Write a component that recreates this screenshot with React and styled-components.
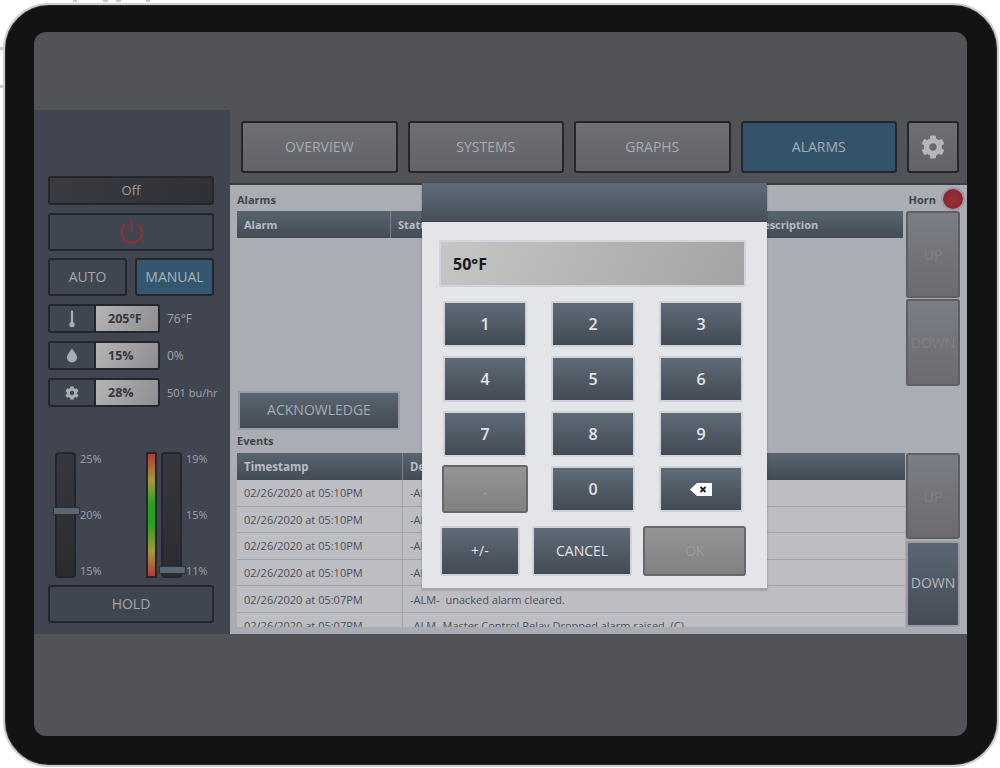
import React from 'react';
import styled, { createGlobalStyle } from 'styled-components';
import { Power } from 'lucide-react';
import { FaCog } from 'react-icons/fa';

const Global = createGlobalStyle`
  html, body { margin: 0; padding: 0; background: #fff; overflow: hidden; }
  * { box-sizing: border-box; }
  body { font-family: "Open Sans", "Liberation Sans", sans-serif; }
`;

const Page = styled.div`
  width: 1000px; height: 768px; padding: 3px 1px 1px 3px; position: relative; background: #fff;
`;
const SideKey = styled.div`
  position: absolute; background: #c9c9c9;
  ${p => p.$top ? `top: 0; left: ${p.$x}px; width: ${p.$w}px; height: 2px;` : `left: 0; top: ${p.$y}px; width: 3px; height: ${p.$h}px;`}
`;
const Tablet = styled.div`
  width: 100%; height: 100%; border: 2px solid #cfcfcf; border-radius: 46px; background: #111413;
  padding: 27px 30px 29px 29px; box-shadow: inset 0 0 0 1px #2a2a2a;
`;
const Screen = styled.div`
  position: relative; width: 100%; height: 100%; border-radius: 12px; overflow: hidden; background: #525357;
  display: flex; flex-direction: column; padding-top: 78px;
`;
const Main = styled.div`
  display: flex; height: 524px;
`;
const Sidebar = styled.aside`
  width: 196px; background: #40454f; padding: 66px 16px 0 14px; display: flex; flex-direction: column; color: #a9adb5;
`;
const DarkBtn = styled.div`
  display: flex; align-items: center; justify-content: center; height: ${p => p.$h}px; width: ${p => p.$w ? p.$w + 'px' : '100%'};
  margin-bottom: ${p => p.$mb ?? 8}px; border: 2px solid #23262c; border-radius: 3px; padding-bottom: 1px;
  background: ${p => p.$bg || '#40464f'}; color: ${p => p.$c || '#a1a6ae'}; font-size: ${p => p.$fs || 14}px; font-weight: 500;
`;
const Row = styled.div`
  display: flex; justify-content: space-between;
`;
const StatRow = styled.div`
  display: flex; align-items: center; height: 29px; margin-bottom: 8px;
`;
const StatBox = styled.div`
  display: flex; flex: 0 0 112px; height: 100%; border: 2px solid #23262c; border-radius: 3px; overflow: hidden;
`;
const StatIcon = styled.div`
  width: 46px; display: flex; align-items: center; justify-content: center; background: #40464f; border-right: 2px solid #23262c;
`;
const StatValue = styled.div`
  flex: 1; display: flex; align-items: center; padding: 0 0 1px 12px; font-size: 12.5px; font-weight: 700; color: #35373d;
  background: linear-gradient(115deg, #b4b4b5, #8e8e90);
`;
const StatText = styled.span`
  margin-left: 7px; font-size: ${p => p.$fs || 12}px; color: #a3a7af; white-space: nowrap; padding-bottom: 1px;
`;
const Sliders = styled.div`
  display: flex; margin: 37px 0 7px 7px; height: 126px;
`;
const Track = styled.div`
  position: relative; width: 21px; height: 126px; border: 2px solid #23262c; border-radius: 4px;
  background: linear-gradient(#37383d, #2b2c30);
`;
const Thumb = styled.div`
  position: absolute; left: -4px; width: 27px; height: 8px; top: ${p => p.$top}px; background: #5a6671; border: 1px solid #2b2f36; border-radius: 1px;
`;
const Scale = styled.div`
  display: flex; flex-direction: column; justify-content: space-between; margin-left: 4px; width: ${p => p.$w}px;
  height: 126px; font-size: 11px; color: #9ea3ab; line-height: 14px;
`;
const Gauge = styled.div`
  width: 11px; height: 126px; margin-right: 4px; border: 2px solid #23262c;
  background: linear-gradient(#b33a3a, #a5973a 22%, #23a021 42%, #23a021 56%, #a5973a 80%, #b33a3a);
`;
const Content = styled.section`
  flex: 1; display: flex; flex-direction: column; min-width: 0;
`;
const Nav = styled.nav`
  height: 75px; padding: 11px 8px 0 11px; display: flex; gap: 10px; background: #525357; border-bottom: 2px solid #3b3e45;
`;
const NavBtn = styled.div`
  width: ${p => p.$w || 156.5}px; height: 52px; display: flex; align-items: center; justify-content: center; font-size: 14px; font-weight: 500;
  color: #a8abb2; border: 2px solid #23262c; border-radius: 3px; padding-bottom: 1px;
  background: ${p => p.$active ? '#32536a' : 'linear-gradient(#6e6f75, #636469)'};
`;
const Panel = styled.div`
  flex: 1; background: #abadb5; padding: 5px 7px 0 7px; display: flex; flex-direction: column; position: relative; min-height: 0;
`;
const HeaderLine = styled.div`
  display: flex; justify-content: space-between; align-items: center; flex-shrink: 0; height: ${p => p.$h || 21}px; padding-bottom: 2px;
`;
const SectionLabel = styled.span`
  font-size: 11px; font-weight: 700; color: #3f434b;
`;
const HornWrap = styled.div`
  display: flex; align-items: center; gap: 7px; margin-right: -3px; margin-top: -1px;
`;
const Led = styled.div`
  width: 20px; height: 20px; border-radius: 50%; background: radial-gradient(#98303a, #85232d); box-shadow: 0 0 0 2px #9a9ca5;
`;
const TableRow = styled.div`
  display: flex; gap: ${p => p.$gap}px; height: ${p => p.$h}px; flex-shrink: 0;
`;
const TableArea = styled.div`
  width: ${p => p.$w}px; display: flex; flex-direction: column;
`;
const THead = styled.div`
  display: flex; height: ${p => p.$h}px; background: linear-gradient(#596570, #434b54); flex-shrink: 0;
`;
const Th = styled.div`
  width: ${p => p.$w ? p.$w + 'px' : 'auto'}; flex: ${p => p.$w ? '0 0 auto' : 1}; display: flex; align-items: center; padding-left: 7px;
  font-size: ${p => p.$fs || 11}px; font-weight: 700; color: #b9bcc2; border-right: ${p => p.$w ? '1px solid #7b838c' : 'none'};
`;
const TBody = styled.div`
  flex: 1; overflow: hidden; min-height: 0;
`;
const Tr = styled.div`
  display: flex; height: 26.6px; background: #bdbec3; border-bottom: 1px solid #a2a4ab;
`;
const Td = styled.div`
  width: ${p => p.$w ? p.$w + 'px' : 'auto'}; flex: ${p => p.$w ? '0 0 auto' : 1}; display: flex; align-items: center; padding-left: 7px;
  font-size: 11px; color: #4b4e56; white-space: pre; border-right: ${p => p.$w ? '1px solid #a2a4ab' : 'none'};
`;
const Side = styled.div`
  width: 54px; display: flex; flex-direction: column; gap: ${p => p.$gap}px;
`;
const ScrollBtn = styled.div`
  flex: 0 0 ${p => p.$h || 87}px; display: flex; align-items: center; justify-content: center; font-size: 14px; border-radius: 3px; font-weight: 500;
  padding-bottom: ${p => p.$on ? 3 : 0}px;
  color: ${p => p.$on ? '#b4b7bd' : '#7f8086'};
  border: 2px solid ${p => p.$on ? '#9a9ca5' : '#5e5f65'};
  background: ${p => p.$on ? 'linear-gradient(#5a6672, #454c56)' : 'linear-gradient(#7b7e85, #6b6b70)'};
`;
const AckBtn = styled.div`
  margin: 5px 0 0 1px; flex: 0 0 39px; width: 162px; display: flex; align-items: center; justify-content: center; font-size: 14px; font-weight: 500; color: #a6abb2;
  border: 2px solid #9a9ca5; background: linear-gradient(#596570, #434b54); padding-bottom: 2px;
`;
const AlarmEmpty = styled.div`
  flex: 1;
`;
const Overlay = styled.div`
  position: absolute; left: 388px; top: 151px; width: 345px; height: 407px; background: #e4e5e9; border-bottom: 2px solid #a5a6ab;
  box-shadow: 0 0 2px rgba(0,0,0,.3); display: flex; flex-direction: column;
`;
const ModalHead = styled.div`
  height: 39px; flex-shrink: 0; background: linear-gradient(#5e6b77, #47505a); border-bottom: 1px solid #3b4149;
`;
const ModalBody = styled.div`
  padding: 18px 21px 0 17px; display: flex; flex-direction: column;
`;
const Display = styled.div`
  height: 47px; display: flex; align-items: center; padding-left: 12px; font-size: 16px; font-weight: 700; color: #17181a;
  border: 2px solid #d2d4dc; border-radius: 2px; background: linear-gradient(115deg, #c6c6c5, #a3a3a4);
`;
const Keypad = styled.div`
  display: grid; grid-template-columns: repeat(3, 84px); grid-auto-rows: 46px; column-gap: 24px; row-gap: 9px; margin: 14px 0 0 4px;
`;
const Key = styled.div`
  display: flex; align-items: center; justify-content: center; font-size: ${p => p.$fs || 16}px; font-weight: 600; color: #e2e4e8;
  border: 2px solid #d0d2da; border-radius: 2px; background: linear-gradient(#5e6b77, #434b54);
`;
const DisabledKey = styled.div`
  display: flex; align-items: center; justify-content: center; font-size: ${p => p.$fs || 16}px; font-weight: 600; color: #9c9ca0;
  margin: ${p => p.$grid ? '-1px' : 0}; border: 2px solid #66676b; border-radius: 3px; background: linear-gradient(#959598, #808080);
`;
const ActionRow = styled.div`
  display: flex; margin: 14px 0 0 1px; height: 50px;
`;
const ActionKey = styled(Key)`
  width: ${p => p.$w}px; margin-right: ${p => p.$mr}px; font-size: 14px; font-weight: 500; padding-bottom: 2px;
`;
const OkKey = styled(DisabledKey)`
  width: 103px; font-size: 14px; font-weight: 500; padding-bottom: 1px;
`;

const Thermo = () => (
  <svg width="8" height="18" viewBox="0 0 8 18"><path d="M2.9 1.5a1.1 1.1 0 0 1 2.2 0v10.4a2.8 2.8 0 1 1-2.2 0z" fill="#a9adb4"/></svg>
);
const Drop = () => (
  <svg width="12" height="15" viewBox="0 0 12 15"><path d="M6 0c1 3 5 6 5 9.5a5 5 0 0 1-10 0C1 6 5 3 6 0z" fill="#a9adb4"/></svg>
);
const Backspace = () => (
  <svg width="22" height="13" viewBox="0 0 22 13"><path d="M7 0h15v13H7L0 6.5z" fill="#fff"/><path d="M10.5 4l5 5M15.5 4l-5 5" stroke="#1d2025" strokeWidth="1.8"/></svg>
);

const events = [
  ['02/26/2020 at 05:10PM', '-AL'],
  ['02/26/2020 at 05:10PM', '-AL'],
  ['02/26/2020 at 05:10PM', '-AL'],
  ['02/26/2020 at 05:10PM', '-AL'],
  ['02/26/2020 at 05:07PM', '-ALM-  unacked alarm cleared.'],
  ['02/26/2020 at 05:07PM', '-ALM- Master Control Relay Dropped alarm raised. (C)'],
];

export default function App() {
  return (
    <Page>
      <Global />
      <SideKey $top $x={73} $w={4} />
      <SideKey $top $x={103} $w={5} />
      <SideKey $top $x={116} $w={5} />
      <SideKey $top $x={146} $w={4} />
      <SideKey $y={47} $h={3} />
      <SideKey $y={85} $h={3} />
      <Tablet>
        <Screen>
          <Main>
            <Sidebar>
              <DarkBtn $h={29} $bg="linear-gradient(90deg, #3a3b40, #303136)" $c="#9a9ea6" $fs={13}>Off</DarkBtn>
              <DarkBtn $h={38} $mb={7}><Power size={27} color="#a0282f" strokeWidth={1.6} /></DarkBtn>
              <Row>
                <DarkBtn $h={38} $w={79}>AUTO</DarkBtn>
                <DarkBtn $h={38} $w={79} $bg="#34566e" $c="#a9b1b9">MANUAL</DarkBtn>
              </Row>
              <StatRow>
                <StatBox><StatIcon><Thermo /></StatIcon><StatValue>205°F</StatValue></StatBox>
                <StatText>76°F</StatText>
              </StatRow>
              <StatRow>
                <StatBox><StatIcon><Drop /></StatIcon><StatValue>15%</StatValue></StatBox>
                <StatText>0%</StatText>
              </StatRow>
              <StatRow>
                <StatBox><StatIcon><FaCog size={14} color="#a9adb4" /></StatIcon><StatValue>28%</StatValue></StatBox>
                <StatText $fs={11}>501 bu/hr</StatText>
              </StatRow>
              <Sliders>
                <Track><Thumb $top={53} /></Track>
                <Scale $w={66}><span>25%</span><span>20%</span><span>15%</span></Scale>
                <Gauge />
                <Track><Thumb $top={112} /></Track>
                <Scale $w={28}><span>19%</span><span>15%</span><span>11%</span></Scale>
              </Sliders>
              <DarkBtn $h={38} $mb={0}>HOLD</DarkBtn>
            </Sidebar>
            <Content>
              <Nav>
                <NavBtn>OVERVIEW</NavBtn>
                <NavBtn>SYSTEMS</NavBtn>
                <NavBtn>GRAPHS</NavBtn>
                <NavBtn $active>ALARMS</NavBtn>
                <NavBtn $w={52}><FaCog size={24} color="#b4b6bb" /></NavBtn>
              </Nav>
              <Panel>
                <HeaderLine>
                  <SectionLabel>Alarms</SectionLabel>
                  <HornWrap><SectionLabel>Horn</SectionLabel><Led /></HornWrap>
                </HeaderLine>
                <TableRow $h={175} $gap={3}>
                  <TableArea $w={666}>
                    <THead $h={27}>
                      <Th $w={154}>Alarm</Th>
                      <Th $w={357}>Status</Th>
                      <Th>Description</Th>
                    </THead>
                    <AlarmEmpty />
                  </TableArea>
                  <Side $gap={1}>
                    <ScrollBtn>UP</ScrollBtn>
                    <ScrollBtn>DOWN</ScrollBtn>
                  </Side>
                </TableRow>
                <AckBtn>ACKNOWLEDGE</AckBtn>
                <HeaderLine $h={23}><SectionLabel>Events</SectionLabel></HeaderLine>
                <TableRow $h={174} $gap={1}>
                  <TableArea $w={668}>
                    <THead $h={27}>
                      <Th $w={166} $fs={11.5}>Timestamp</Th>
                      <Th $fs={11.5}>Description</Th>
                    </THead>
                    <TBody>
                      {events.map((e, i) => (
                        <Tr key={i}><Td $w={166}>{e[0]}</Td><Td>{e[1]}</Td></Tr>
                      ))}
                    </TBody>
                  </TableArea>
                  <Side $gap={2}>
                    <ScrollBtn $h={86}>UP</ScrollBtn>
                    <ScrollBtn $on $h={86}>DOWN</ScrollBtn>
                  </Side>
                </TableRow>
              </Panel>
            </Content>
          </Main>
          <Overlay>
            <ModalHead />
            <ModalBody>
              <Display>50°F</Display>
              <Keypad>
                {['1','2','3','4','5','6','7','8','9'].map(k => <Key key={k}>{k}</Key>)}
                <DisabledKey $grid>.</DisabledKey>
                <Key>0</Key>
                <Key><Backspace /></Key>
              </Keypad>
              <ActionRow>
                <ActionKey $w={80} $mr={12}>+/-</ActionKey>
                <ActionKey $w={101} $mr={11}>CANCEL</ActionKey>
                <OkKey>OK</OkKey>
              </ActionRow>
            </ModalBody>
          </Overlay>
        </Screen>
      </Tablet>
    </Page>
  );
}
